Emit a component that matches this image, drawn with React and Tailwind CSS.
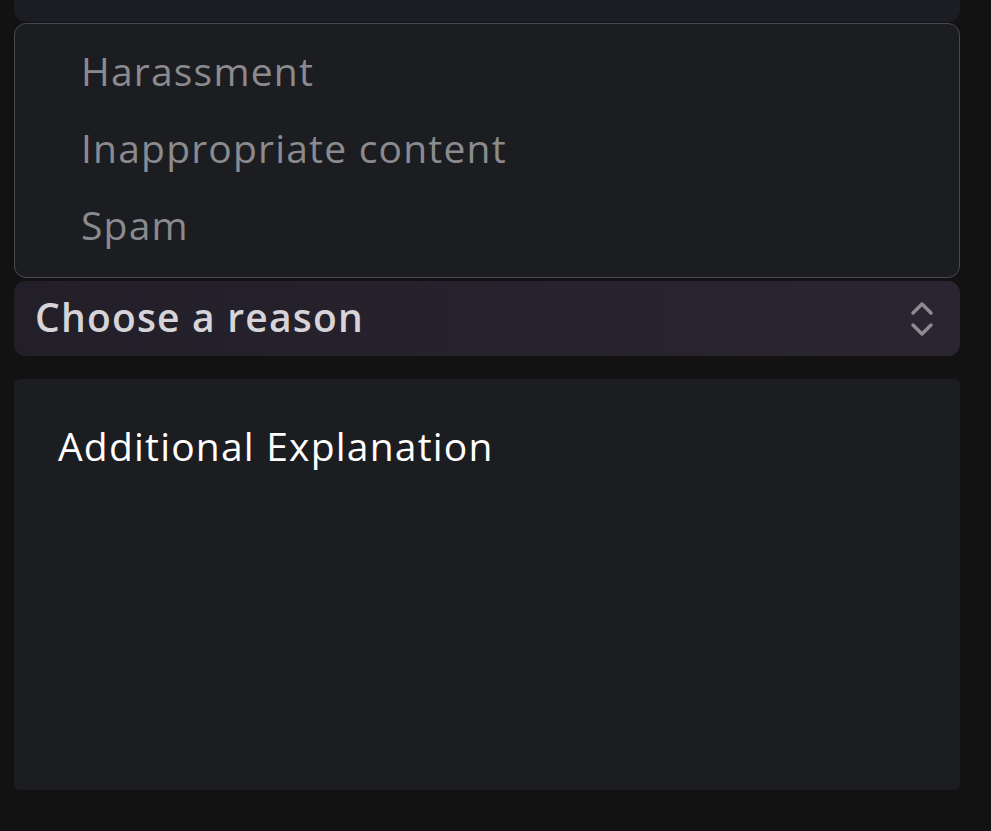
import React from "react";

const reasons = ["Harassment", "Inappropriate content", "Spam"];

function Chevrons() {
  return (
    <svg width="28" height="40" viewBox="0 0 28 40" fill="none" stroke="#8d8b91" strokeWidth="3.5" strokeLinecap="round" strokeLinejoin="round">
      <path d="M5 14 L14 5 L23 14" />
      <path d="M5 26 L14 35 L23 26" />
    </svg>
  );
}

export default function App() {
  return (
    <div className="min-h-[831px] w-full bg-[#121213] pl-[14px] font-['Open_Sans',sans-serif] tracking-[1.2px]">
      <div className="w-[946px]">
        <div className="h-[22px] rounded-b-xl bg-[#1c1d22]" />

        <ul className="mt-px rounded-xl border border-[#48494e] bg-[#1c1d21] pt-[8px] pb-[14px]">
          {reasons.map((r) => (
            <li key={r} className="flex h-[77px] items-center pl-[66px] text-[39px] leading-none text-[#8b8b8f]">
              {r}
            </li>
          ))}
        </ul>

        <button className="mt-[3px] flex h-[75px] w-full items-center justify-between rounded-xl bg-gradient-to-r from-[#231f29] to-[#2a2531] pl-[21px] pr-[24px] text-[39px] leading-none font-semibold text-[#d6d4d9]">
          <span className="pb-[5px]">Choose a reason</span>
          <Chevrons />
        </button>

        <div className="mt-[23px] h-[411px] rounded-md bg-[#1c1d21] px-[44px] pt-[47px]">
          <p className="text-[39px] leading-none text-white">Additional Explanation</p>
        </div>
      </div>
    </div>
  );
}
